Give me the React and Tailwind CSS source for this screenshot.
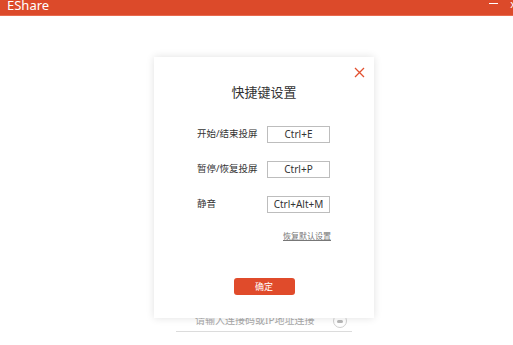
const shortcuts = [
  { label: "开始/结束投屏", keys: "Ctrl+E" },
  { label: "暂停/恢复投屏", keys: "Ctrl+P" },
  { label: "静音", keys: "Ctrl+Alt+M" },
];

export default function App() {
  return (
    <div className="relative w-[513px] h-[345px] overflow-hidden bg-white font-['Noto_Sans','Noto_Sans_CJK_SC',sans-serif]">
      {/* title bar */}
      <div className="flex h-[16px] items-end justify-between bg-[#dc4a2a] border-b border-[#e86a4e] pl-[7px]">
        <span className="text-[13px] leading-[13px] text-white mb-[3px]">EShare</span>
        <div className="flex items-start h-full gap-[12px] pr-0">
          <div className="mt-[3px] h-[1px] w-[9px] bg-white" />
          <span className="text-[11px] leading-[8px] text-white -mr-[3px]">x</span>
        </div>
      </div>

      {/* page behind the dialog */}
      <div className="flex flex-col items-center pt-[297px]">
        <div className="ml-[15px] flex w-[176px] items-center justify-between border-b border-[#dcdcdc] pb-[4px] pl-[19px] pr-[5px]">
          <span className="text-[10px] leading-[14px] text-[#a8a8a8]">请输入连接码或IP地址连接</span>
          <div className="flex h-[14px] w-[14px] items-center justify-center rounded-full border border-[#d0d0d0] mb-[-2px]">
            <div className="h-[3px] w-[6px] rounded-full bg-[#b8b8b8]" />
          </div>
        </div>
      </div>

      {/* dialog */}
      <div className="absolute left-[154px] top-[57px] flex h-[261px] w-[220px] flex-col items-center bg-white shadow-[0_0_8px_rgba(0,0,0,0.12)]">
        <div className="flex w-full justify-end pr-[9px] pt-[10px]">
          <svg width="11" height="11" viewBox="0 0 11 11">
            <path d="M1 1 L10 10 M10 1 L1 10" stroke="#e2502f" strokeWidth="1.3" fill="none" />
          </svg>
        </div>
        <h1 className="mt-[6px] text-[13px] leading-[16px] text-[#333]">快捷键设置</h1>
        <div className="mt-[26px] flex w-full flex-col gap-[18px] pl-[43px]">
          {shortcuts.map((s) => (
            <div key={s.label} className="flex items-center">
              <span className="w-[70px] text-[9.5px] text-[#333]">{s.label}</span>
              <div className="flex h-[17px] w-[63px] items-center justify-center border border-[#bdbdbd] text-[10px] text-[#333]">
                {s.keys}
              </div>
            </div>
          ))}
        </div>
        <div className="mt-[18px] flex w-full justify-end pr-[43px]">
          <span className="text-[8px] leading-[10px] text-[#777] underline">恢复默认设置</span>
        </div>
        <button className="mt-[37px] flex h-[17px] w-[61px] items-center justify-center rounded-[3px] bg-[#e04b2b] text-[9px] text-white">
          确定
        </button>
      </div>
    </div>
  );
}
